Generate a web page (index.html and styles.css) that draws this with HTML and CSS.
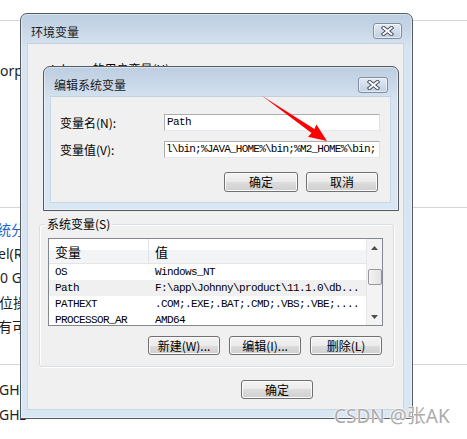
FILE: index.html
```html
<!DOCTYPE html>
<html lang="zh-CN">
<head>
<meta charset="utf-8">
<title>环境变量</title>
<link rel="stylesheet" href="styles.css">
</head>
<body>
<div class="page">
  <div class="bg">
    <div class="rule rule-top"></div>
    <div class="bg-text t-corp">orporation</div>
    <div class="rule rule-mid"></div>
    <div class="bg-rows">
      <div class="bg-text link sh17">系统分级不可用</div>
      <div class="bg-text sh2">el(R) Core(TM)</div>
      <div class="bg-text">0 GB</div>
      <div class="bg-text sh1">位操作系统</div>
      <div class="bg-text sh2">有可用的输入</div>
    </div>
    <div class="rule rule-low"></div>
    <div class="bg-rows2">
      <div class="bg-text sh9">2GHz</div>
      <div class="bg-text sh9">2GHz</div>
    </div>
  </div>

  <div class="win outer">
    <div class="titlebar">
      <span class="title">环境变量</span>
      <span class="close">
        <svg width="13" height="10" viewBox="0 0 13 10"><path d="M2.5 1.8L10.5 8.2M10.5 1.8L2.5 8.2" stroke="#3d4b5e" stroke-width="3.8" stroke-linecap="square"/><path d="M2.5 1.8L10.5 8.2M10.5 1.8L2.5 8.2" stroke="#fff" stroke-width="2" stroke-linecap="square"/></svg>
      </span>
    </div>
    <div class="client">
      <div class="user-group">
        <span class="user-label">Johnny 的用户变量(U)</span>
      </div>
      <div class="group">
        <span class="group-label">系统变量(S)</span>
        <div class="list">
          <div class="list-main">
            <div class="lrow head">
              <span class="c1">变量</span><span class="c2">值</span>
            </div>
            <div class="lrow"><span class="c1 mono">OS</span><span class="c2 mono">Windows_NT</span></div>
            <div class="lrow alt"><span class="c1 mono">Path</span><span class="c2 mono">F:\app\Johnny\product\11.1.0\db...</span></div>
            <div class="lrow"><span class="c1 mono">PATHEXT</span><span class="c2 mono">.COM;.EXE;.BAT;.CMD;.VBS;.VBE;....</span></div>
            <div class="lrow"><span class="c1 mono">PROCESSOR_AR</span><span class="c2 mono">AMD64</span></div>
          </div>
          <div class="scrollbar">
            <div class="sb-btn"><svg width="7" height="4" viewBox="0 0 7 4"><path d="M0 4L3.5 0L7 4Z" fill="#4d4d4d"/></svg></div>
            <div class="sb-track"><div class="thumb"></div></div>
            <div class="sb-btn"><svg width="7" height="4" viewBox="0 0 7 4"><path d="M0 0L3.5 4L7 0Z" fill="#4d4d4d"/></svg></div>
          </div>
        </div>
        <div class="btn-row">
          <span class="btn w72">新建(W)...</span>
          <span class="btn w72">编辑(I)...</span>
          <span class="btn w72">删除(L)</span>
        </div>
      </div>
      <div class="ok-row">
        <span class="btn w72">确定</span>
      </div>
    </div>
  </div>

  <div class="win inner">
    <div class="titlebar">
      <span class="title">编辑系统变量</span>
      <span class="close close-sm">
        <svg width="13" height="10" viewBox="0 0 13 10"><path d="M2.5 1.8L10.5 8.2M10.5 1.8L2.5 8.2" stroke="#3d4b5e" stroke-width="3.8" stroke-linecap="square"/><path d="M2.5 1.8L10.5 8.2M10.5 1.8L2.5 8.2" stroke="#fff" stroke-width="2" stroke-linecap="square"/></svg>
      </span>
    </div>
    <div class="client inner-client">
      <div class="field">
        <span class="flabel">变量名(N):</span>
        <span class="input mono">Path</span>
      </div>
      <div class="field">
        <span class="flabel">变量值(V):</span>
        <span class="input mono tight">l\bin;%JAVA_HOME%\bin;%M2_HOME%\bin;</span>
      </div>
      <div class="dlg-btns">
        <span class="btn w74">确定</span>
        <span class="btn w72">取消</span>
      </div>
    </div>
  </div>

  <svg class="arrow" width="467" height="439" viewBox="0 0 467 439">
    <path d="M261.5 95.5L314.4 128.9L316.4 124.6L327 141L308 136.7L311.6 133.1Z" fill="#ff0000"/>
  </svg>

  <div class="watermark">CSDN @张AK</div>
</div>
</body>
</html>
```

FILE: styles.css
```css
* { box-sizing: border-box; }
html, body { margin: 0; padding: 0; background: #fff; }
body {
  font-family: "Noto Sans CJK SC", "Noto Sans", sans-serif;
  font-size: 12px;
  color: #000;
}
.page {
  position: relative;
  width: 467px;
  height: 439px;
  overflow: hidden;
  background: #fff;
}

/* background system page */
.bg { display: flex; flex-direction: column; }
.rule { height: 1px; background: #d6d6d6; }
.rule-top { margin-top: 20px; }
.rule-mid { margin-top: 126px; }
.rule-low { margin-top: 25px; }
.bg-text {
  white-space: nowrap;
  font-family: "Noto Sans", "Noto Sans CJK SC", sans-serif;
  font-size: 14px;
  line-height: 20px;
  color: #1e1e1e;
}
.t-corp { margin-top: 40px; }
.bg-rows { margin-top: 10px; display: flex; flex-direction: column; }
.bg-rows .bg-text { line-height: 24.2px; }
.bg-rows2 { margin-top: 12px; display: flex; flex-direction: column; }
.bg-rows2 .bg-text { line-height: 25px; }
.link { color: #1c64c6; }
.sh1 { margin-left: -1px; }
.sh2 { margin-left: -2px; }
.sh9 { margin-left: -9px; }
.sh17 { margin-left: -17px; }

/* windows */
.win {
  position: absolute;
  display: flex;
  flex-direction: column;
  border: 1px solid #555a60;
  border-radius: 7px 7px 0 0;
  background: linear-gradient(to bottom, #bccee1 0px, #cddbea 22px, #d7e4f2 34px, #d9e6f3 100%);
  box-shadow: inset 0 0 0 1px rgba(255,255,255,0.45);
}
.outer {
  left: 20px;
  top: 13px;
  width: 393px;
  height: 406px;
  padding: 0 8px 8px 6px;
}
.inner {
  left: 43px;
  top: 66px;
  width: 356px;
  height: 145px;
  padding: 0 7px 7px 6px;
}
.titlebar {
  height: 29px;
  flex: none;
  display: flex;
  justify-content: space-between;
  align-items: flex-start;
  padding: 9px 2px 0 4px;
}
.inner .titlebar { padding: 10px 3px 0 4px; }
.title {
  margin-top: 1px;
  line-height: 16px;
  font-size: 12px;
  color: #1b1b1b;
}
.inner .title { margin-top: 0; }
.close {
  width: 29px;
  height: 16px;
  border: 1px solid #7d8ea6;
  border-radius: 3px;
  background: linear-gradient(to bottom, #e3eaf3 0%, #d2dcea 50%, #c3d0e0 100%);
  box-shadow: inset 0 0 0 1px rgba(255,255,255,0.55);
  display: flex;
  align-items: center;
  justify-content: center;
}
.close-sm { width: 30px; height: 16px; }

.client {
  flex: 1;
  background: #f0f0f0;
  display: flex;
  flex-direction: column;
  border: 1px solid #c9d6e3;
  border-top-color: #c2d0df;
}

/* outer client */
.outer .client { padding: 0 9px 0 11px; }
.user-group {
  height: 180px;
  flex: none;
  padding: 16px 0 0 9px;
}
.user-label { line-height: 14px; }
.group {
  height: 143px;
  flex: none;
  border: 1px solid #d5dfe5;
  border-radius: 3px;
  box-shadow: inset 1px 1px 0 #fff, 1px 1px 0 #fff;
  padding: 0 10px 0 8px;
  display: flex;
  flex-direction: column;
}
.group-label {
  align-self: flex-start;
  margin: -8px 0 0 -3px;
  padding: 0 2px;
  background: #f0f0f0;
  line-height: 14px;
}
.list {
  margin-top: 7px;
  height: 88px;
  flex: none;
  border: 1px solid #828790;
  background: #fff;
  display: flex;
  overflow: hidden;
}
.list-main { flex: 1; display: flex; flex-direction: column; overflow: hidden; }
.lrow {
  display: flex;
  height: 16px;
  flex: none;
  align-items: center;
  white-space: nowrap;
}
.lrow.alt { background: #f0f0f0; }
.lrow.head {
  height: 25px;
  background: linear-gradient(to bottom, #ffffff 0%, #ffffff 45%, #f3f4f6 45%, #f3f4f6 100%);
  border-bottom: 1px solid #e5e5e5;
  font-size: 13px;
  align-items: center;
}
.lrow.head .c1 { border-right: 1px solid #e3e3e3; align-self: stretch; display: flex; align-items: center; }
.c1 { width: 100px; flex: none; padding-left: 6px; }
.c2 { flex: 1; padding-left: 6px; overflow: hidden; }
.mono {
  font-family: "Liberation Mono", "DejaVu Sans Mono", monospace;
  font-size: 11px;
  letter-spacing: -0.6px;
}
.scrollbar {
  width: 16px;
  flex: none;
  display: flex;
  flex-direction: column;
  background: #f3f3f3;
  border-left: 1px solid #e8e8e8;
}
.sb-btn {
  height: 17px;
  flex: none;
  display: flex;
  align-items: center;
  justify-content: center;
}
.sb-track { flex: 1; padding: 13px 0 0 1px; }
.thumb {
  width: 14px;
  height: 16px;
  border: 1px solid #979797;
  border-radius: 2px;
  background: linear-gradient(to right, #f4f4f4, #e2e2e2);
}
.btn-row {
  margin-top: 10px;
  display: flex;
  justify-content: flex-end;
  gap: 9px;
  padding-right: 1px;
}
.btn {
  height: 19px;
  border: 1px solid #707070;
  border-radius: 3px;
  background: linear-gradient(to bottom, #f3f3f3 0%, #ebebeb 50%, #dddddd 50%, #cfcfcf 100%);
  box-shadow: inset 0 0 0 1px #fbfbfb;
  display: flex;
  align-items: center;
  justify-content: center;
  font-size: 12px;
  line-height: 14px;
  white-space: nowrap;
}
.w72 { width: 72px; }
.w74 { width: 74px; }
.ok-row {
  margin-top: 13px;
  padding-left: 202px;
  display: flex;
}

/* inner dialog client */
.inner-client { padding: 17px 10px 0 9px; }
.field { display: flex; align-items: center; }
.field + .field { margin-top: 10px; }
.flabel { width: 104px; flex: none; font-size: 12px; }
.input {
  width: 217px;
  height: 17px;
  border: 1px solid #abadb3;
  border-right-color: #dbdfe6;
  border-bottom-color: #e3e9ef;
  background: #fff;
  padding-left: 2px;
  line-height: 15px;
  white-space: nowrap;
  overflow: hidden;
}
.input.tight { padding-left: 1px; letter-spacing: -0.78px; }
.dlg-btns {
  margin-top: 14px;
  display: flex;
  justify-content: flex-end;
  gap: 8px;
  padding-right: 2px;
}
.dlg-btns .btn { height: 20px; }

.arrow { position: absolute; left: 0; top: 0; pointer-events: none; }

.watermark {
  position: absolute;
  left: 334px;
  top: 404px;
  font-family: "Noto Sans", "Noto Sans CJK SC", sans-serif;
  font-size: 19px;
  line-height: 24px;
  color: #ababab;
  text-shadow: 0 0 2px #fff, 0 0 2px #fff, 0 0 1px #fff;
  white-space: nowrap;
}
```
